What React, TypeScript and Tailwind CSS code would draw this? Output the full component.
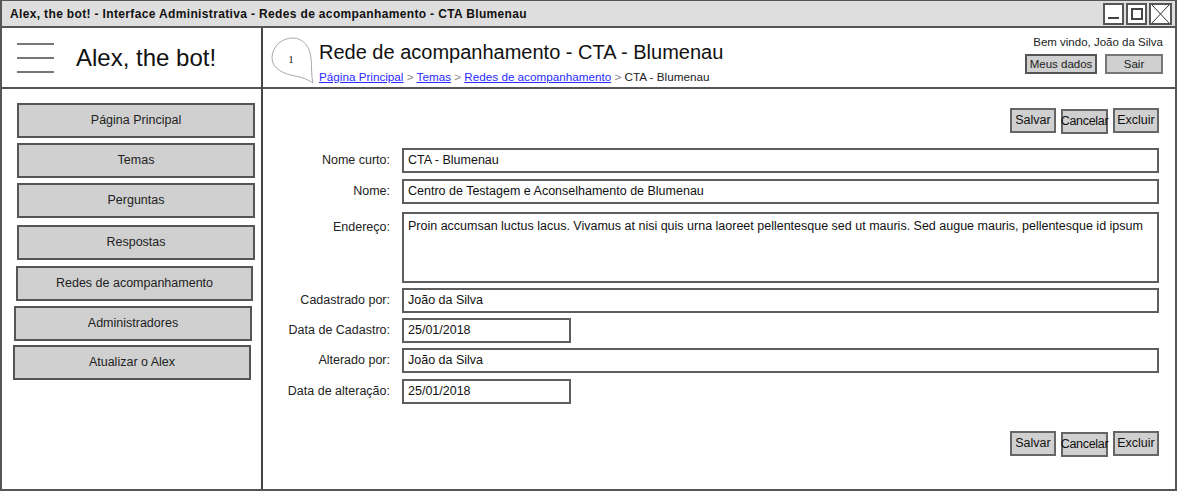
import React from "react";

const navItems: { label: string; cls: string }[] = [
  { label: "Página Principal", cls: "mt-[14px] ml-[15px] w-[238px]" },
  { label: "Temas", cls: "mt-[5px] ml-[15px] w-[238px]" },
  { label: "Perguntas", cls: "mt-[5px] ml-[15px] w-[238px]" },
  { label: "Respostas", cls: "mt-[7px] ml-[15px] w-[238px]" },
  { label: "Redes de acompanhamento", cls: "mt-[6px] ml-[14px] w-[237px]" },
  { label: "Administradores", cls: "mt-[5px] ml-[12px] w-[238px]" },
  { label: "Atualizar o Alex", cls: "mt-[4px] ml-[11px] w-[238px]" },
];

function Btn({ children, cls = "" }: { children: React.ReactNode; cls?: string }) {
  return (
    <div
      className={`flex h-[25px] items-center justify-center border-2 border-[#666] bg-[#d0d0d0] text-[12.5px] text-[#111] ${cls}`}
    >
      {children}
    </div>
  );
}

function ActionRow() {
  return (
    <div className="flex justify-end gap-[5px] pr-[16px]">
      <Btn cls="w-[46px]">Salvar</Btn>
      <Btn cls="w-[47px] mt-[1px] tracking-[-0.3px]">Cancelar</Btn>
      <Btn cls="w-[46px]">Excluir</Btn>
    </div>
  );
}

function Field({
  label,
  value,
  cls = "",
  inputCls = "",
  tall = false,
}: {
  label: string;
  value: string;
  cls?: string;
  inputCls?: string;
  tall?: boolean;
}) {
  return (
    <div className={`flex ${tall ? "items-start" : "items-center"} ${cls}`}>
      <div
        className={`w-[111px] shrink-0 text-right text-[12.5px] text-[#222] ${tall ? "pt-[6px]" : ""}`}
      >
        {label}
      </div>
      <div
        className={`ml-[12px] border-2 border-[#5e5e5e] bg-white px-[4px] text-[12.5px] text-[#111] ${
          tall ? "h-[71px] pt-[4px] leading-[16px]" : "flex h-[25px] items-center"
        } ${inputCls}`}
      >
        {value}
      </div>
    </div>
  );
}

export default function App() {
  return (
    <div className="h-[491px] w-[1186px] overflow-hidden bg-white font-['Comic_Sans_MS','Liberation_Sans',Arial,sans-serif] text-black">
      <div className="flex h-[491px] w-[1177px] flex-col border-x-2 border-b-2 border-t border-[#555]">
        {/* title bar */}
        <div className="flex h-[27px] shrink-0 items-center border-b-2 border-[#555] bg-[#dedede] pl-[8px] pr-[3px]">
          <div className="flex-1 text-[12px] font-bold tracking-[0.35px] text-[#111]">
            Alex, the bot! - Interface Administrativa - Redes de acompanhamento - CTA Blumenau
          </div>
          <div className="flex gap-[2px]">
            <div className="flex h-[22px] w-[21px] items-end justify-center border-2 border-[#555] bg-white pb-[4px]">
              <div className="h-[2px] w-[11px] bg-[#444]" />
            </div>
            <div className="flex h-[22px] w-[21px] items-center justify-center border-2 border-[#555] bg-white">
              <div className="h-[12px] w-[12px] border-2 border-[#444]" />
            </div>
            <div className="h-[22px] w-[23px] border-2 border-[#555] bg-white">
              <svg width="19" height="18" viewBox="0 0 19 18">
                <path d="M1 0 L18 18 M18 0 L1 18" stroke="#333" strokeWidth="1" />
              </svg>
            </div>
          </div>
        </div>

        <div className="flex min-h-0 flex-1">
          {/* sidebar */}
          <div className="flex w-[261px] shrink-0 flex-col border-r-2 border-[#444]">
            <div className="flex h-[61px] shrink-0 items-center border-b-2 border-[#555]">
              <div className="ml-[15px] flex w-[37px] flex-col gap-[12px]">
                <div className="h-[2px] bg-[#777]" />
                <div className="h-[2px] bg-[#777]" />
                <div className="h-[2px] bg-[#777]" />
              </div>
              <div className="ml-[22px] text-[24px] leading-none text-[#111]">Alex, the bot!</div>
            </div>
            <div className="flex flex-col">
              {navItems.map((n) => (
                <div
                  key={n.label}
                  className={`flex h-[35px] items-center justify-center border-2 border-[#555] bg-[#d0d0d0] text-[12.5px] text-[#222] ${n.cls}`}
                >
                  {n.label}
                </div>
              ))}
            </div>
          </div>

          {/* main */}
          <div className="flex min-w-0 flex-1 flex-col">
            <div className="flex h-[61px] shrink-0 border-b-2 border-[#555]">
              <div className="ml-[7px] mt-[8px]">
                <svg width="46" height="50" viewBox="0 0 46 50">
                  <path
                    d="M43 47 C41 40 42 30 41 22 C40 11 33 2 23 2 C11 2 2 11 2 22 C2 33 14 38 25 40 C32 41 39 44 43 47 Z"
                    fill="white"
                    stroke="#aaa"
                    strokeWidth="1"
                  />
                  <text
                    x="21"
                    y="27"
                    fontSize="11"
                    fontFamily="Liberation Serif, serif"
                    fill="#222"
                    textAnchor="middle"
                  >
                    1
                  </text>
                </svg>
              </div>
              <div className="ml-[3px] flex flex-col">
                <div className="mt-[13px] text-[20px] leading-[22px] text-[#111]">
                  Rede de acompanhamento - CTA - Blumenau
                </div>
                <div className="mt-[7px] text-[11.7px] leading-[13px] text-[#222]">
                  <span className="text-[#2a2aff] underline">Página Principal</span>
                  <span className="text-[#888]"> &gt; </span>
                  <span className="text-[#2a2aff] underline">Temas</span>
                  <span className="text-[#888]"> &gt; </span>
                  <span className="text-[#2a2aff] underline">Redes de acompanhamento</span>
                  <span className="text-[#888]"> &gt; </span>
                  <span>CTA - Blumenau</span>
                </div>
              </div>
              <div className="ml-auto mr-[12px] flex flex-col items-end">
                <div className="mt-[6px] text-[11.5px] text-[#222]">Bem vindo, João da Silva</div>
                <div className="mt-[3px] flex gap-[8px]">
                  <div className="flex h-[20px] w-[72px] items-center justify-center border-2 border-[#555] bg-[#d0d0d0] text-[11.5px] text-[#222]">
                    Meus dados
                  </div>
                  <div className="flex h-[20px] w-[58px] items-center justify-center border-2 border-[#777] bg-[#d0d0d0] text-[11.5px] text-[#222]">
                    Sair
                  </div>
                </div>
              </div>
            </div>

            <div className="flex flex-col pt-[19px]">
              <ActionRow />
              <div className="mt-[14px] flex flex-col gap-[5px] pl-[16px] pr-[16px]">
                <Field label="Nome curto:" value="CTA - Blumenau" inputCls="flex-1" />
                <Field label="Nome:" value="Centro de Testagem e Aconselhamento de Blumenau" inputCls="flex-1" cls="mt-[1px]" />
                <Field
                  label="Endereço:"
                  value="Proin accumsan luctus lacus. Vivamus at nisi quis urna laoreet pellentesque sed ut mauris. Sed augue mauris, pellentesque id ipsum"
                  inputCls="flex-1"
                  cls="mt-[3px]"
                  tall
                />
                <Field label="Cadastrado por:" value="João da Silva" inputCls="flex-1" />
                <Field label="Data de Cadastro:" value="25/01/2018" inputCls="w-[169px]" />
                <Field label="Alterado por:" value="João da Silva" inputCls="flex-1" />
                <Field label="Data de alteração:" value="25/01/2018" inputCls="w-[169px]" cls="mt-[1px]" />
              </div>
              <div className="mt-[27px]">
                <ActionRow />
              </div>
            </div>
          </div>
        </div>
      </div>
    </div>
  );
}
